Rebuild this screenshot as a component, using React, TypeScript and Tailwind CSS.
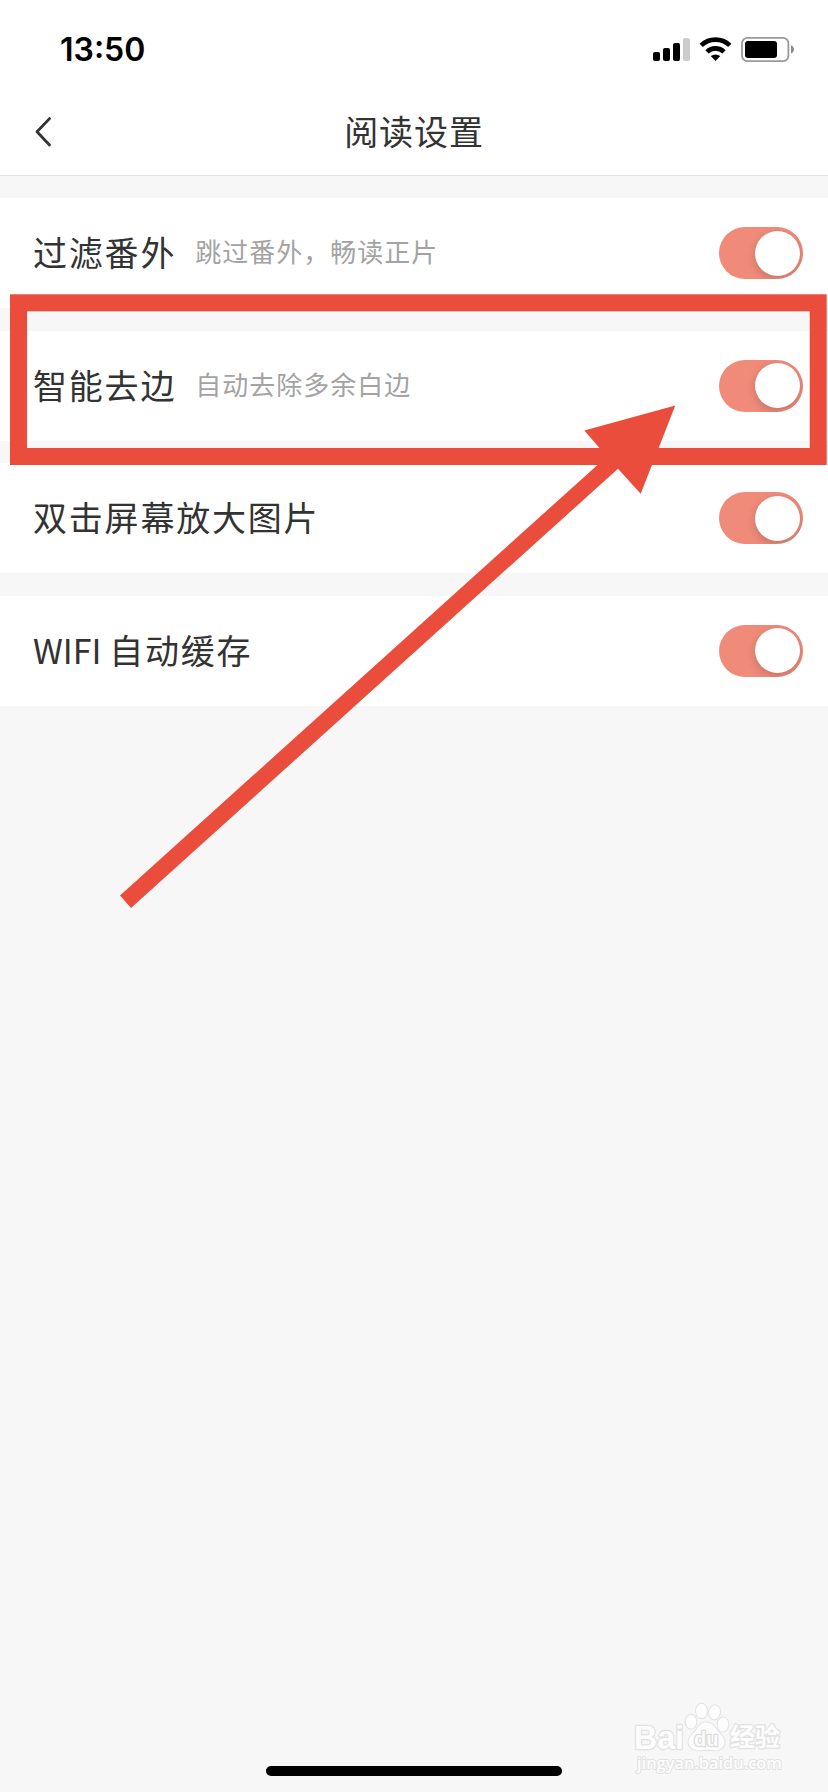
import { useState } from 'react'
import type { ReactNode } from 'react'
import { clsx } from 'clsx'

interface Setting {
  id: string
  label: ReactNode
  hint?: string
}

const settings: Setting[] = [
  { id: 'skip-extra', label: '过滤番外', hint: '跳过番外，畅读正片' },
  { id: 'trim', label: '智能去边', hint: '自动去除多余白边' },
  { id: 'zoom', label: '双击屏幕放大图片' },
  { id: 'wifi', label: <><span className="tracking-normal">WIFI </span>自动缓存</> },
]

function StatusBar() {
  return (
    <div className="flex h-[88px] items-center justify-between pt-3 pr-[33px] pl-[60px]">
      <span className="font-['Inter',sans-serif] text-[32px] leading-[38px] font-semibold text-black">13:50</span>
      <svg width="143" height="28" viewBox="652 36 143 28">
        <rect x="653" y="52" width="7" height="9" rx="2" />
        <rect x="663" y="48" width="7" height="13" rx="2" />
        <rect x="673" y="43" width="7" height="18" rx="2" />
        <rect x="683" y="38" width="7" height="23" rx="2" fill="#ccc" />
        <g fill="none" stroke="#000" strokeWidth="4.6">
          <path d="M701.2 45.4a20.6 20.6 0 0 1 28.6 0" />
          <path d="M707 51.8a12.2 12.2 0 0 1 17 0" />
        </g>
        <path d="M715.5 61l-4.8-4.9q4.8-3.4 9.6 0z" />
        <rect x="742" y="37.8" width="46.4" height="23.4" rx="5.5" fill="#fff" stroke="#999" strokeWidth="1.8" />
        <rect x="745" y="41" width="32" height="17" rx="3" />
        <path d="M791 45.3c4 1.6 4 6.6 0 8.2z" fill="#888" />
      </svg>
    </div>
  )
}

function Header() {
  return (
    <header className="grid h-[88px] grid-cols-[1fr_auto_1fr] items-center border-b border-[#e6e6e6] pb-px">
      <button type="button" aria-label="返回" className="ml-[34px] w-5 pt-px">
        <svg width="20" height="32" viewBox="0 0 20 32" fill="none" stroke="#333" strokeWidth="2.8" strokeLinecap="round" strokeLinejoin="round">
          <path d="M15.500 2.6L3 15.8L15.500 29" />
        </svg>
      </button>
      <h1 className="text-[34px] leading-[48px] tracking-[0.9px]">阅读设置</h1>
    </header>
  )
}

function Toggle({ on, onChange }: { on: boolean; onChange: () => void }) {
  return (
    <button
      type="button"
      role="switch"
      aria-checked={on}
      onClick={onChange}
      className={clsx('flex h-[52px] w-[84px] items-center overflow-hidden rounded-full px-[3px]', on ? 'justify-end bg-[#f08b7a]' : 'justify-start bg-zinc-300')}
    >
      <span className="h-[45px] w-[45px] rounded-full bg-white shadow-[0_3px_10px_rgba(0,0,0,0.18)]" />
    </button>
  )
}

function Annotation() {
  return (
    <svg className="pointer-events-none absolute top-0 left-0" width="828" height="1000" viewBox="0 0 828 1000">
      <rect x="18.5" y="302.8" width="799.7" height="153.7" fill="none" stroke="#eb4d3d" strokeWidth="17" />
      <path d="M120 895.5L606.9 456.4L584.3 430.5L675.3 405.5L640.7 493.7L618 468.7L131 908z" fill="#eb4d3d" />
    </svg>
  )
}

function Watermark() {
  return (
    <svg className="pointer-events-none absolute top-[1690px] left-[620px]" width="200" height="100" viewBox="620 1690 200 100">
      <g fill="#fdfdfd" stroke="#e2e2e2" strokeWidth="2.4" strokeLinejoin="round" paintOrder="stroke">
        <text x="634" y="1749" fontFamily="Liberation Sans" fontWeight="700" fontSize="34" textLength="50" lengthAdjust="spacingAndGlyphs">Bai</text>
        <g strokeWidth="2">
          <ellipse cx="691" cy="1721.7" rx="5.3" ry="7" />
          <ellipse cx="701.5" cy="1711" rx="5.5" ry="7.3" />
          <ellipse cx="714.5" cy="1712.3" rx="5.5" ry="7" transform="rotate(12 714.5 1712.3)" />
          <ellipse cx="723" cy="1724.5" rx="5.3" ry="7" transform="rotate(8 723 1724.5)" />
          <path d="M706.5 1722.5c5 0 7.500 3 9.500 6.500c2.500 4 9.500 8 8.500 14c-1 6-6 7.500-11 7.200c-5-.5-8-.5-13 0c-6 .5-11.500-2-12-8c-.5-6 6-9 8.500-13.500c2-3.500 4.500-6.200 9.500-6.200z" />
        </g>
        <text x="694" y="1746" fontFamily="Liberation Sans" fontWeight="700" fontSize="20" fill="#fafafa" stroke="#dcdcdc" strokeWidth="2.500">du</text>
        <text x="730" y="1746" fontFamily="Noto Sans CJK SC" fontWeight="700" fontSize="25">经验</text>
        <text x="637" y="1769" fontFamily="Open Sans" fontWeight="600" fontSize="17" strokeWidth="2" textLength="145" lengthAdjust="spacingAndGlyphs">jingyan.baidu.com</text>
      </g>
    </svg>
  )
}

export default function App() {
  const [off, setOff] = useState<string[]>([])

  function toggle(id: string) {
    setOff((ids) => (ids.includes(id) ? ids.filter((i) => i !== id) : [...ids, id]))
  }

  return (
    <div className="relative flex h-[1792px] w-[828px] flex-col overflow-hidden bg-[#f7f7f7] font-['Noto_Sans_CJK_SC',sans-serif] text-[#333]">
      <div className="bg-white">
        <StatusBar />
        <Header />
      </div>
      <main className="mt-[22px] flex flex-col gap-[22.500px]">
        {settings.map((s) => (
          <div key={s.id} className="flex h-[110px] items-center justify-between bg-white pr-[25px] pl-[33px]">
            <div className="flex items-center pb-0.5">
              <span className="text-[34px] leading-[48px] tracking-[1.8px]">{s.label}</span>
              {s.hint && <span className="ml-[19px] pb-0.5 text-[26px] leading-[38px] tracking-[1px] text-[#a3a3a3]">{s.hint}</span>}
            </div>
            <Toggle on={!off.includes(s.id)} onChange={() => toggle(s.id)} />
          </div>
        ))}
      </main>
      <div className="mx-auto mt-auto mb-4 h-2.5 w-[296px] rounded-full bg-black" />
      <Annotation />
      <Watermark />
    </div>
  )
}
